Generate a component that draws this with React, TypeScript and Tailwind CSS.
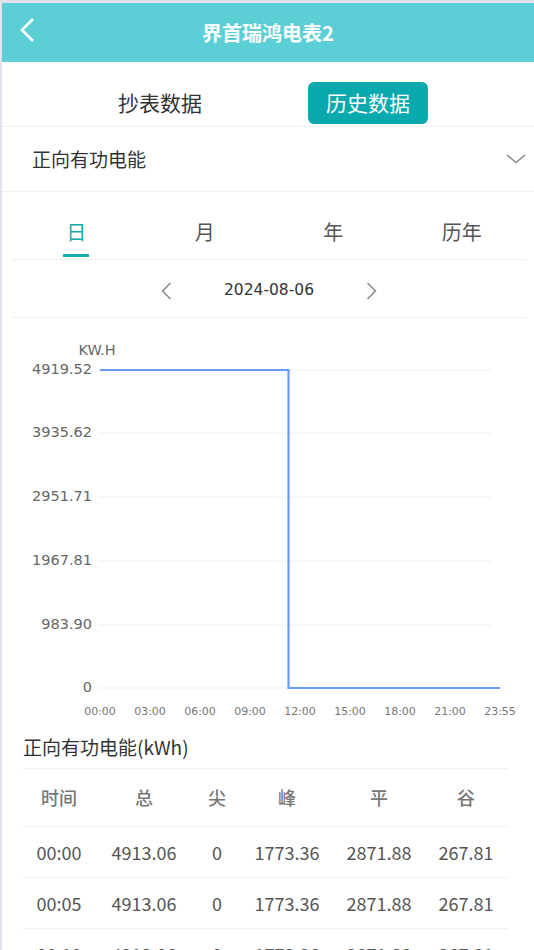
const font = { fontFamily: '"Noto Sans CJK SC", "Noto Sans", sans-serif' }
const numFont = '"DejaVu Sans", "Noto Sans", sans-serif'

const tabs = ["日", "月", "年", "历年"]

const yTicks = [
  { label: "4919.52", y: 370 },
  { label: "3935.62", y: 433 },
  { label: "2951.71", y: 497 },
  { label: "1967.81", y: 561 },
  { label: "983.90", y: 625 },
  { label: "0", y: 688 },
]

const xTicks = ["00:00", "03:00", "06:00", "09:00", "12:00", "15:00", "18:00", "21:00", "23:55"]

const columns = ["时间", "总", "尖", "峰", "平", "谷"]

const rows = [
  ["00:00", "4913.06", "0", "1773.36", "2871.88", "267.81"],
  ["00:05", "4913.06", "0", "1773.36", "2871.88", "267.81"],
  ["00:10", "4913.06", "0", "1773.36", "2871.88", "267.81"],
]

const gridCols = "grid grid-cols-[72px_98px_48px_92px_92px_82px]"

const Chevron = ({ dir, className }: { dir: "left" | "right" | "down"; className?: string }) => {
  if (dir === "down") {
    return (
      <svg width="20" height="10" viewBox="0 0 20 10" className={className}>
        <polyline points="1,1 10,8.5 19,1" fill="none" stroke="currentColor" strokeWidth="1.5" />
      </svg>
    )
  }
  return (
    <svg width="11" height="18" viewBox="0 0 11 18" className={className}>
      <polyline
        points={dir === "left" ? "9.5,1 1.5,9 9.5,17" : "1.5,1 9.5,9 1.5,17"}
        fill="none"
        stroke="currentColor"
        strokeWidth="1.5"
      />
    </svg>
  )
}

const EnergyChart = () => (
  <svg width="532" height="408" viewBox="2 318 532 408" className="block" fontFamily={numFont}>
    <text x="97" y="351" textAnchor="middle" dominantBaseline="middle" fontSize="14.5" fill="#666">
      KW.H
    </text>
    {yTicks.map((t) => (
      <g key={t.label}>
        <line x1="98" x2="491" y1={t.y} y2={t.y} stroke="#efefef" strokeWidth="1" />
        <text x="92" y={t.y} textAnchor="end" dominantBaseline="middle" fontSize="14.5" fill="#666">
          {t.label}
        </text>
      </g>
    ))}
    {xTicks.map((t, i) => (
      <text key={t} x={100 + i * 50} y="712" textAnchor="middle" dominantBaseline="middle" fontSize="11" fill="#777">
        {t}
      </text>
    ))}
    <path d="M100 370 H288.5 V688 H500" fill="none" stroke="#6a9af6" strokeWidth="2.2" />
  </svg>
)

export default function App() {
  return (
    <div style={font} className="w-[534px] min-h-[950px] bg-white border-t-[3px] border-l-2 border-[#e2e2ea] text-[#333] overflow-hidden">
      <div className="relative h-[59px] bg-[#5bcfd5] flex items-center justify-center">
        <svg width="16" height="26" viewBox="0 0 16 26" className="absolute left-[17px] top-[14px] text-white">
          <polyline points="14,2 3,13 14,24" fill="none" stroke="currentColor" strokeWidth="2.6" />
        </svg>
        <span className="text-white text-[20px] font-bold">界首瑞鸿电表2</span>
      </div>

      <div className="h-[64px] flex items-end pb-[2px] pl-[98px] gap-[88px]">
        <div className="w-[120px] h-[42px] flex items-center justify-center text-[21px] text-[#333]">抄表数据</div>
        <div className="w-[120px] h-[42px] flex items-center justify-center rounded-[6px] bg-[#0aa9ae] text-[21px] text-white">
          历史数据
        </div>
      </div>

      <div className="h-[66px] flex items-center justify-between pl-[30px] pr-[8px] border-y border-[#f0f0f0]">
        <span className="text-[19px] text-[#333]">正向有功电能</span>
        <Chevron dir="down" className="text-[#888]" />
      </div>

      <div className="ml-[10px] mr-[8px] grid grid-cols-4 h-[68px] border-b border-[#f0f0f0]">
        {tabs.map((t, i) => (
          <div key={t} className="relative flex items-center justify-center pt-[12px]">
            <span className={i === 0 ? "text-[20px] text-[#14aab0]" : "text-[20px] text-[#555]"}>{t}</span>
            {i === 0 && <div className="absolute bottom-[2px] w-[26px] h-[3px] bg-[#14aab0]" />}
          </div>
        ))}
      </div>

      <div className="ml-[10px] mr-[8px] h-[58px] flex items-center justify-center gap-[52px] border-b border-[#f0f0f0] pt-[4px]">
        <Chevron dir="left" className="text-[#8a8a8a]" />
        <span className="text-[15.5px] text-[#333]" style={{ fontFamily: numFont }}>
          2024-08-06
        </span>
        <Chevron dir="right" className="text-[#8a8a8a]" />
      </div>

      <EnergyChart />

      <div className="pl-[21px] pr-[25px]">
        <div className="h-[42px] flex items-center text-[19px] text-[#333]">正向有功电能(kWh)</div>
        <div className="border-t border-[#f0f0f0]">
          <div className={`${gridCols} h-[58px] items-center border-b border-[#f0f0f0]`}>
            {columns.map((c) => (
              <div key={c} className="text-center text-[18px] font-medium text-[#777]">
                {c}
              </div>
            ))}
          </div>
          {rows.map((r, ri) => (
            <div key={ri} className={`${gridCols} h-[51px] items-center border-b border-[#f0f0f0]`}>
              {r.map((v, ci) => (
                <div key={ci} className="text-center text-[18px] text-[#555]">
                  {v}
                </div>
              ))}
            </div>
          ))}
        </div>
      </div>
    </div>
  )
}
